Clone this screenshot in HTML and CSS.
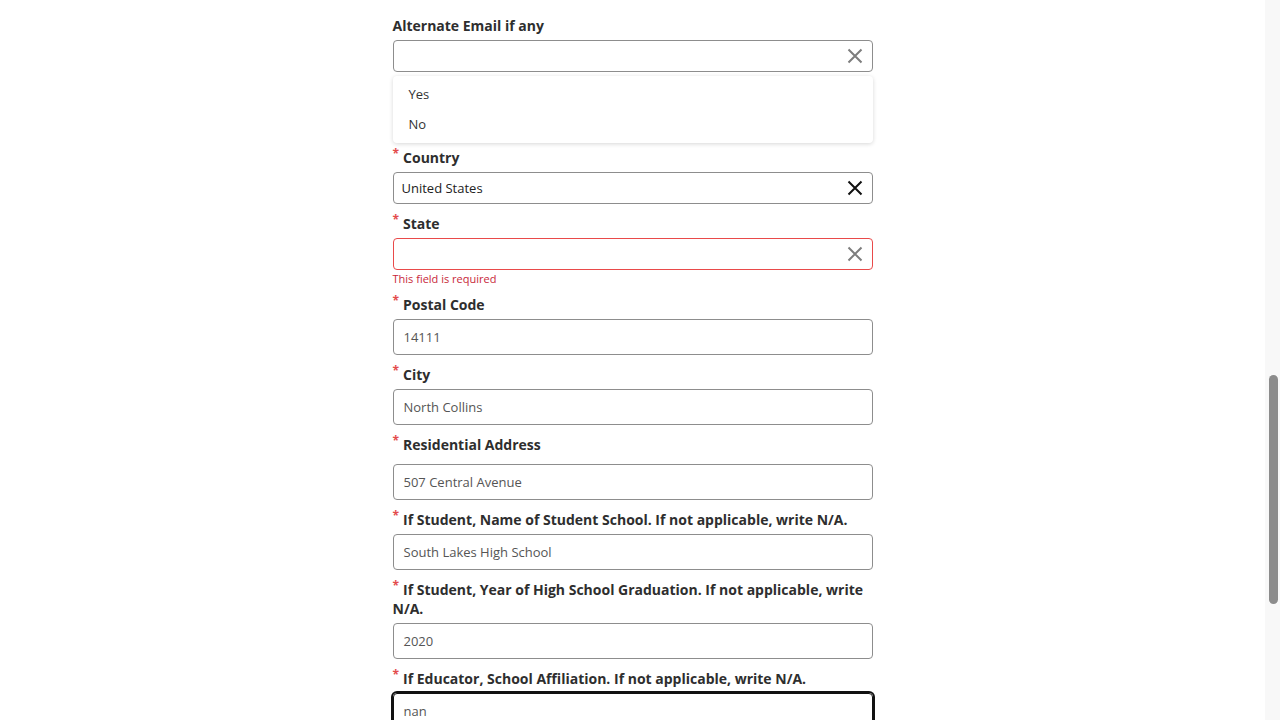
FILE: index.html
```html
<!DOCTYPE html>
<html lang="en">
<head>
<meta charset="utf-8">
<title>Form</title>
<link rel="stylesheet" href="styles.css">
</head>
<body>
<div class="window">
  <main class="page">
    <form class="form">
      <div class="field field-menu">
        <label class="label">Alternate Email if any</label>
        <div class="select">
          <span class="select-value"></span>
          <svg class="clear" viewBox="0 0 16 16" width="16" height="16"><path d="M1.5 1.5L14.5 14.5M14.5 1.5L1.5 14.5"/></svg>
        </div>
        <ul class="menu">
          <li class="menu-item">Yes</li>
          <li class="menu-item">No</li>
        </ul>
      </div>

      <div class="field">
        <label class="label"><span class="req">*</span>Country</label>
        <div class="select">
          <span class="select-value">United States</span>
          <svg class="clear clear-dark" viewBox="0 0 16 16" width="16" height="16"><path d="M1.5 1.5L14.5 14.5M14.5 1.5L1.5 14.5"/></svg>
        </div>
      </div>

      <div class="field field-error">
        <label class="label"><span class="req">*</span>State</label>
        <div class="select select-error">
          <span class="select-value"></span>
          <svg class="clear" viewBox="0 0 16 16" width="16" height="16"><path d="M1.5 1.5L14.5 14.5M14.5 1.5L1.5 14.5"/></svg>
        </div>
        <div class="error">This field is required</div>
      </div>

      <div class="field">
        <label class="label"><span class="req">*</span>Postal Code</label>
        <div class="input">14111</div>
      </div>

      <div class="field">
        <label class="label"><span class="req">*</span>City</label>
        <div class="input">North Collins</div>
      </div>

      <div class="field">
        <label class="label label-wide"><span class="req">*</span>Residential Address</label>
        <div class="input">507 Central Avenue</div>
      </div>

      <div class="field">
        <label class="label"><span class="req">*</span>If Student, Name of Student School. If not applicable, write N/A.</label>
        <div class="input">South Lakes High School</div>
      </div>

      <div class="field">
        <label class="label"><span class="req">*</span>If Student, Year of High School Graduation. If not applicable, write N/A.</label>
        <div class="input">2020</div>
      </div>

      <div class="field">
        <label class="label"><span class="req">*</span>If Educator, School Affiliation. If not applicable, write N/A.</label>
        <div class="input input-focus">nan</div>
      </div>
    </form>
  </main>
  <div class="scrollbar">
    <div class="thumb"></div>
  </div>
</div>
</body>
</html>
```

FILE: styles.css
```css
* { box-sizing: border-box; }
html, body {
  margin: 0;
  padding: 0;
  height: 100%;
  overflow: hidden;
  background: #fff;
}
body {
  font-family: "Open Sans", "Liberation Sans", sans-serif;
  color: #333;
}
.window {
  display: flex;
  height: 720px;
}
.page {
  flex: 1;
  display: flex;
  justify-content: center;
  overflow: hidden;
}
.form {
  width: 480px;
  padding-top: 16px;
  display: flex;
  flex-direction: column;
  gap: 10px;
}
.field {
  display: flex;
  flex-direction: column;
}
.label {
  font-size: 14px;
  font-weight: 700;
  line-height: 19px;
  color: #2e2e2e;
  margin-bottom: 5px;
}
.label-wide { margin-bottom: 10px; }
.req {
  color: #e34c4c;
  font-size: 12px;
  font-weight: 700;
  line-height: 0;
  vertical-align: 5px;
  margin-right: 4px;
}
.select {
  height: 32px;
  border: 1px solid #8d8d8d;
  border-radius: 4px;
  display: flex;
  align-items: center;
  padding: 0 9px 0 8px;
  background: #fff;
}
.select-error { border-color: #e94a4a; }
.select-value {
  flex: 1;
  font-size: 13px;
  color: #222;
}
.clear {
  fill: none;
  stroke: #7d7d7d;
  stroke-width: 2;
}
.clear-dark { stroke: #111; }
.error {
  font-size: 11px;
  line-height: 15px;
  color: #c8283a;
  margin-top: 1px;
  margin-bottom: -1px;
}
.input {
  height: 36px;
  border: 1px solid #8d8d8d;
  border-radius: 4px;
  padding: 0 10px;
  display: flex;
  align-items: center;
  font-size: 13px;
  color: #555;
}
.input-focus {
  border-color: #111;
  box-shadow: 0 0 0 2px #111;
}
.menu {
  margin: 4px 0 -5px;
  padding: 3px 0 4px;
  list-style: none;
  background: #fff;
  border-radius: 4px;
  box-shadow: 0 1px 4px rgba(0,0,0,0.16);
}
.menu-item {
  height: 30px;
  line-height: 30px;
  padding-left: 16px;
  font-size: 13px;
  color: #333;
}
.scrollbar {
  width: 15px;
  background: #f8f8f8;
  padding-top: 375px;
  display: flex;
  justify-content: center;
}
.thumb {
  width: 9px;
  height: 229px;
  margin-left: 1px;
  border-radius: 5px;
  background: #8c8c8c;
}
```
